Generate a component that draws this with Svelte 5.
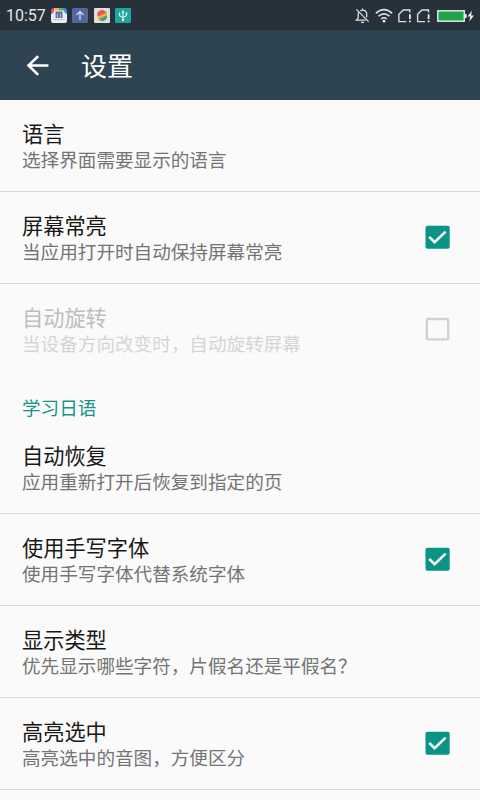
<script>
  let general = $state([
    { title: '语言', summary: '选择界面需要显示的语言' },
    { title: '屏幕常亮', summary: '当应用打开时自动保持屏幕常亮', checked: true },
    { title: '自动旋转', summary: '当设备方向改变时，自动旋转屏幕', checked: false, disabled: true }
  ]);

  let japanese = $state([
    { title: '自动恢复', summary: '应用重新打开后恢复到指定的页' },
    { title: '使用手写字体', summary: '使用手写字体代替系统字体', checked: true },
    { title: '显示类型', summary: '优先显示哪些字符，片假名还是平假名？' },
    { title: '高亮选中', summary: '高亮选中的音图，方便区分', checked: true }
  ]);

  function toggle(item) {
    if (item.disabled || item.checked === undefined) return;
    item.checked = !item.checked;
  }
</script>

{#snippet preference(item)}
  <button class="preference" disabled={item.disabled} onclick={() => toggle(item)}>
    <span class="preference__text">
      <span class="preference__title">{item.title}</span>
      <span class="preference__summary">{item.summary}</span>
    </span>
    {#if item.checked !== undefined}
      <svg class="checkbox" viewBox="0 0 25 25">
        {#if item.checked}
          <rect class="checkbox__fill" x="0.5" y="0.8" width="24.2" height="23" rx="2" />
          <path class="checkbox__mark" d="M4.2 11.9l5.4 5.2L20.6 6.6" />
        {:else}
          <rect class="checkbox__box" x="1.8" y="2" width="21.4" height="20.4" rx="1.2" />
        {/if}
      </svg>
    {/if}
  </button>
{/snippet}

<div class="screen">
  <div class="status">
    <span class="status__time">10:57</span>
    <div class="status__apps">
      <svg viewBox="0 0 16 16">
        <path fill="#d94f91" d="M0 5V3a3 3 0 0 1 3-3h2v6z" />
        <path fill="#f2b33b" d="M3 0h5v4H3z" />
        <path fill="#54b86b" d="M8 0h4v5H8z" />
        <path fill="#3e91df" d="M12 0h1a3 3 0 0 1 3 3v4h-4z" />
        <path fill="#e8edf4" d="M0 6l2-1 1.5-2.5h9L14 5l2 1v7a2 2 0 0 1-2 2H2a2 2 0 0 1-2-2z" />
        <path fill="#556fae" d="M4.5 3.5h7V10h-7z" />
        <path fill="none" stroke="#d9bb82" d="M6.5 5.5v4m3-4v4" />
        <path fill="none" stroke="#bdc6d4" d="M2 11.5h12" />
      </svg>
      <svg viewBox="0 0 16 16">
        <rect width="16" height="15" rx="1.5" fill="#52659c" />
        <path d="M8 12V3.7M4.5 7L8 3.5 11.5 7" fill="none" stroke="#d3daed" stroke-width="1.3" />
      </svg>
      <svg viewBox="0 0 16 16">
        <rect width="16" height="15" rx="1" fill="#dedfd9" />
        <path fill="#e65b4f" d="M3 7a5 5 0 0 1 8-4l2 2-8 4z" />
        <path fill="#edb83e" d="M3.5 9l8.5-4 1 2-7 5-2-1z" />
        <path fill="#55a66a" d="M5 11l8-4a5 5 0 0 1-7 5.5z" />
        <path fill="#4f84c4" d="M8 12l5-4a5 5 0 0 1-5 5z" />
      </svg>
      <svg viewBox="0 0 16 16">
        <rect width="16" height="15" rx="1" fill="#20a4a0" />
        <path
          d="M8 12V3.5M4.5 5.5v2.2L8 9.7l3.5-2V5.5"
          fill="none"
          stroke="#d8f4ee"
          stroke-width="1.1"
        />
        <path d="M6.5 4.5L8 2l1.5 2.5z" fill="#d8f4ee" />
        <circle cx="8" cy="12" r="1.2" fill="#d8f4ee" />
        <circle cx="4.5" cy="5.5" r="0.9" fill="#d8f4ee" />
        <path d="M10.6 4.6h1.8v1.8h-1.8z" fill="#d8f4ee" />
      </svg>
    </div>
    <svg class="status__system" viewBox="0 0 120 20">
      <g fill="none" stroke="#d9e0e4" stroke-width="1.3">
        <path d="M10.8 14.2H1.3l1.9-2.4V8.6q0-1.4.7-2.4M5.4 4.9q1-.7 2.1-.7 4.2 0 4.2 4.4v2.6M7.5 4.2V2.6" />
        <path d="M1.4 3.4l12.2 12.2M6 16.3h3" />
        <path
          stroke-width="1.6"
          d="M20.8 7.3q8.2-7.2 16.4 0M23.5 10.2q5.5-4.6 11 0M26.2 12.9q2.8-2.3 5.6 0"
        />
        <path d="M51.3 15.6h-7.4V8.2L48.2 4h6.6v2.4" stroke-width="1.4" />
        <path d="M70 15.6h-7.4V8.2L66.9 4h6.6v2.4" stroke-width="1.4" />
      </g>
      <g fill="#e7edf0">
        <circle cx="29" cy="15.2" r="1.4" />
        <path d="M54 8.2h1.8v4.9H54zM54 14.4h1.8v1.9H54z" />
        <path d="M72.7 8.2h1.8v4.9h-1.8zM72.7 14.4h1.8v1.9h-1.8z" />
        <path d="M110 8h1.6v4H110zM117 4.4l-4.5 6h2.8l-1 5.2 4.7-6.2h-2.9z" />
      </g>
      <rect x="82.8" y="4.8" width="26.5" height="10.4" fill="#20a34a" stroke="#dce9e2" stroke-width="1.5" />
    </svg>
  </div>

  <header>
    <svg class="back" viewBox="0 0 24 24">
      <path d="M22.5 12H3.5M12.6 3L3.4 12l9.2 9" />
    </svg>
    <h1>设置</h1>
  </header>

  <main>
    <section>
      {#each general as item}
        {@render preference(item)}
      {/each}
    </section>
    <section>
      <h2>学习日语</h2>
      {#each japanese as item}
        {@render preference(item)}
      {/each}
    </section>
  </main>
</div>

<style>
  :global(body) {
    margin: 0;
    overflow: hidden;
  }
  .screen {
    display: flex;
    flex-direction: column;
    width: 100%;
    height: 100vh;
    overflow: hidden;
    background: #fafafa;
    font-family: Roboto, 'Noto Sans CJK SC', sans-serif;
  }

  .status {
    display: flex;
    align-items: center;
    flex-shrink: 0;
    box-sizing: border-box;
    height: 30px;
    padding: 2px 5px 0 6px;
    background: #263139;
  }
  .status__time {
    width: 45px;
    color: #e0e6e9;
    font-size: 16px;
    line-height: 20px;
  }
  .status__apps {
    display: flex;
    gap: 5.3px;
  }
  .status__apps svg {
    width: 16px;
    height: 16px;
  }
  .status__system {
    width: 120px;
    height: 20px;
    margin-left: auto;
  }

  header {
    display: flex;
    align-items: center;
    flex-shrink: 0;
    height: 70px;
    padding-left: 25px;
    background: #2f4452;
  }
  .back {
    width: 25px;
    height: 25px;
    margin-right: 31px;
    fill: none;
    stroke: #fff;
    stroke-width: 2.5;
  }
  h1 {
    margin: 0;
    padding-top: 3px;
    color: #fff;
    font-size: 26px;
    font-weight: 400;
    line-height: 38px;
  }

  h2 {
    box-sizing: border-box;
    height: 46px;
    margin: 0;
    padding: 21px 22px 0;
    color: #159588;
    font-size: 18.6px;
    font-weight: 400;
    line-height: 25px;
  }

  .preference {
    display: flex;
    align-items: center;
    justify-content: space-between;
    box-sizing: border-box;
    width: 100%;
    height: 92px;
    padding: 0 30px 0 22px;
    border: 0;
    border-bottom: 1px solid #d9d9d9;
    background: none;
    font-family: inherit;
    text-align: left;
  }
  .preference:disabled {
    border-bottom-color: transparent;
  }
  .preference__text {
    display: flex;
    flex-direction: column;
    padding-top: 4px;
  }
  .preference__title {
    color: #181818;
    font-size: 21.2px;
    line-height: 26px;
  }
  .preference__summary {
    color: #747474;
    font-size: 18.6px;
    line-height: 26px;
  }
  .preference:disabled .preference__title {
    color: #bdbdbd;
  }
  .preference:disabled .preference__summary {
    color: #d5d5d5;
  }

  .checkbox {
    width: 25px;
    height: 25px;
  }
  .checkbox__fill {
    fill: #099486;
  }
  .checkbox__mark {
    fill: none;
    stroke: #fafafa;
    stroke-width: 2.6;
  }
  .checkbox__box {
    fill: none;
    stroke: #d2d2d2;
    stroke-width: 2.4;
  }
</style>
